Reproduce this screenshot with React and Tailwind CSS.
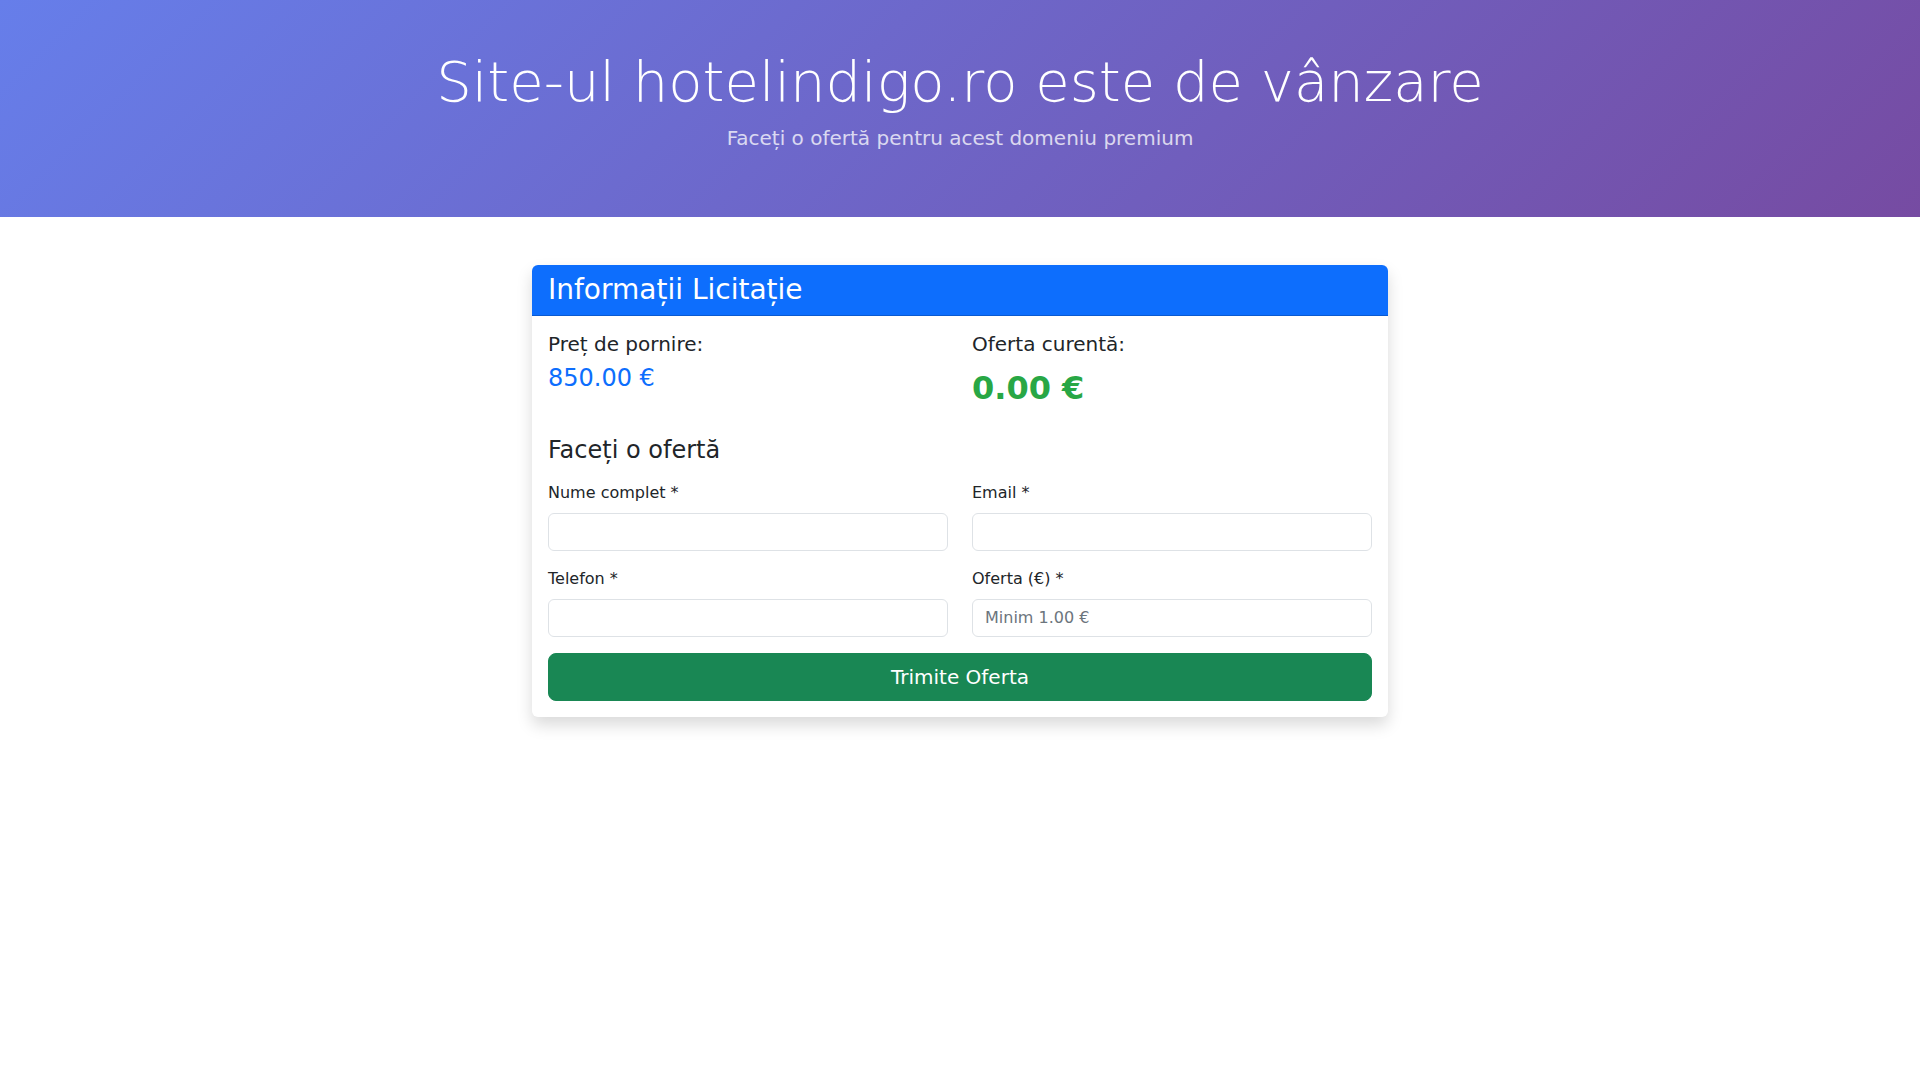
export default function App() {
  const font = { fontFamily: '"DejaVu Sans", "Noto Sans", sans-serif' };
  return (
    <div className="min-h-screen bg-white text-[#212529]" style={font}>
      <header className="bg-[linear-gradient(135deg,#667eea_0%,#764ba2_100%)] py-12 text-center text-white">
        <h1 className="mb-2 text-[56px] font-extralight leading-[1.2]">Site-ul hotelindigo.ro este de vânzare</h1>
        <p className="mb-4 text-[20px] leading-[30px] opacity-75">Faceți o ofertă pentru acest domeniu premium</p>
      </header>
      <main className="mx-auto mt-12 w-[856px]">
        <div className="overflow-hidden rounded-[6px] bg-white shadow-[0_8px_16px_rgba(0,0,0,0.15)]">
          <div className="border-b border-black/[0.175] bg-[#0d6efd] px-4 py-2 text-white">
            <h3 className="text-[28px] font-normal leading-[1.2]">Informații Licitație</h3>
          </div>
          <div className="p-4">
            <div className="mb-6 grid grid-cols-2 gap-x-6">
              <div>
                <h5 className="mb-2 text-[20px] leading-[1.2]">Preț de pornire:</h5>
                <h4 className="text-[24px] leading-[1.2] text-[#0d6efd]">850.00 €</h4>
              </div>
              <div>
                <h5 className="mb-2 text-[20px] leading-[1.2]">Oferta curentă:</h5>
                <div className="text-[32px] font-bold leading-[1.5] text-[#28a745]">0.00 €</div>
              </div>
            </div>
            <h4 className="mb-4 text-[24px] leading-[1.2]">Faceți o ofertă</h4>
            <form onSubmit={(e) => e.preventDefault()}>
              <div className="grid grid-cols-2 gap-x-6">
                <div className="mb-4">
                  <label className="mb-2 block text-[16px] font-normal leading-6">Nume complet *</label>
                  <input type="text" className="block h-[38px] w-full rounded-[6px] border border-[#dee2e6] px-3 text-[16px] outline-none" />
                </div>
                <div className="mb-4">
                  <label className="mb-2 block text-[16px] font-normal leading-6">Email *</label>
                  <input type="email" className="block h-[38px] w-full rounded-[6px] border border-[#dee2e6] px-3 text-[16px] outline-none" />
                </div>
                <div className="mb-4">
                  <label className="mb-2 block text-[16px] font-normal leading-6">Telefon *</label>
                  <input type="tel" className="block h-[38px] w-full rounded-[6px] border border-[#dee2e6] px-3 text-[16px] outline-none" />
                </div>
                <div className="mb-4">
                  <label className="mb-2 block text-[16px] font-normal leading-6">Oferta (€) *</label>
                  <input type="text" placeholder="Minim 1.00 €" className="block h-[38px] w-full rounded-[6px] border border-[#dee2e6] px-3 text-[16px] outline-none placeholder:text-[#6c757d]" />
                </div>
              </div>
              <button type="submit" className="block h-12 w-full rounded-[8px] border border-[#198754] bg-[#198754] text-[20px] leading-[30px] text-white">Trimite Oferta</button>
            </form>
          </div>
        </div>
      </main>
    </div>
  );
}
